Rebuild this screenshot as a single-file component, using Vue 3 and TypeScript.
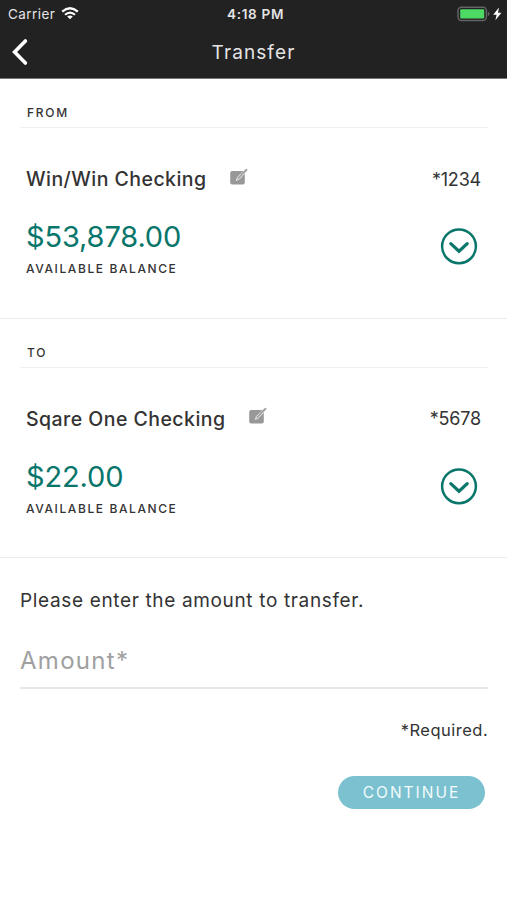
<script setup lang="ts">
interface Account {
  id: string
  label: string
  name: string
  mask: string
  balance: string
}

const accounts: Account[] = [
  { id: 'from', label: 'FROM', name: 'Win/Win Checking', mask: '*1234', balance: '$53,878.00' },
  { id: 'to', label: 'TO', name: 'Sqare One Checking', mask: '*5678', balance: '$22.00' },
]
</script>

<template>
  <main class="screen">
    <header class="top">
      <div class="status">
        <div class="carrier">
          <span class="carrier-name">Carrier</span>
          <svg class="wifi" viewBox="0 0 18 13" width="18" height="13">
            <path d="M1.2 4.6 Q9 -2.2 16.8 4.6" fill="none" stroke="#fff" stroke-width="2.3" />
            <path d="M4 7.8 Q9 3.4 14 7.8" fill="none" stroke="#fff" stroke-width="2.1" />
            <path d="M9 12.3 L6.2 9.6 Q9 7.6 11.8 9.6 Z" fill="#fff" />
          </svg>
        </div>
        <span class="time">4:18 PM</span>
        <div class="power">
          <svg viewBox="0 0 46 16" width="46" height="16">
            <rect x="1" y="1.2" width="28.4" height="13.2" rx="3.4" fill="none" stroke="#606462" stroke-width="1.5" />
            <rect x="3.2" y="3.2" width="24" height="9.2" rx="1.2" fill="#4cd964" />
            <path d="M30.8 5.4 Q32.6 6.2 32.6 7.8 Q32.6 9.4 30.8 10.2 Z" fill="#606462" />
            <path d="M42 1.6 L36.2 8.8 H39.6 L38.4 14.2 L44.4 6.8 H41 Z" fill="#fff" />
          </svg>
        </div>
      </div>
      <div class="nav">
        <button class="back" aria-label="Back">
          <svg viewBox="0 0 16 28" width="16" height="28">
            <path d="M13.4 3 L2.6 14 L13.4 25" fill="none" stroke="#fff" stroke-width="3.6" stroke-linecap="round" stroke-linejoin="miter" />
          </svg>
        </button>
        <h1 class="title">Transfer</h1>
      </div>
    </header>

    <section v-for="a in accounts" :key="a.id" class="account" :class="a.id">
      <h2 class="label">{{ a.label }}</h2>
      <div class="row">
        <span class="name">{{ a.name }}</span>
        <svg class="edit" viewBox="0 0 20 18" width="20" height="18">
          <rect x="1.2" y="3" width="14.6" height="13.4" rx="2" fill="#989898" />
          <path d="M7.4 12.4 L8.4 9.4 L16.6 1.2 L18.2 2.6 L10.2 11.2 Z" fill="#a2a2a2" stroke="#f2f2f2" stroke-width="0.9" stroke-linejoin="round" />
          <path d="M12.5 6.7 L17.6 1.7" stroke="#a2a2a2" stroke-width="1.7" stroke-linecap="round" />
        </svg>
        <span class="mask">{{ a.mask }}</span>
      </div>
      <div class="details">
        <div>
          <div class="balance">{{ a.balance }}</div>
          <div class="caption">AVAILABLE BALANCE</div>
        </div>
        <button class="expand" aria-label="Choose account">
          <svg viewBox="0 0 38 38" width="38" height="38">
            <circle cx="19" cy="19.3" r="16.9" fill="none" stroke="#08766a" stroke-width="2.5" />
            <path d="M10.8 16.6 L19 24.2 L27.2 16.6" fill="none" stroke="#08766a" stroke-width="3.2" stroke-linecap="round" stroke-linejoin="miter" />
          </svg>
        </button>
      </div>
    </section>

    <section class="form">
      <p class="prompt">Please enter the amount to transfer.</p>
      <div class="field"><span class="placeholder">Amount*</span></div>
      <p class="required">*Required.</p>
      <button class="continue"><span>CONTINUE</span></button>
    </section>
  </main>
</template>

<style>
body {
  background: #fff;
}
</style>

<style scoped>
.screen {
  height: 900px;
  overflow: hidden;
  background: #fff;
  color: #333;
  font-family: Inter, "Liberation Sans", sans-serif;
}
button {
  margin: 0;
  padding: 0;
  border: 0;
  background: none;
  font: inherit;
}
svg {
  display: block;
}
.top {
  height: 79px;
  box-sizing: border-box;
  background: #222;
  border-bottom: 1px solid #777;
  color: #e4e4e4;
}
.status {
  display: grid;
  grid-template-columns: 1fr auto 1fr;
  align-items: center;
  height: 27px;
  padding: 0 4px 0 8px;
}
.carrier {
  display: flex;
  align-items: center;
  gap: 6px;
}
.carrier-name {
  font-size: 13.5px;
  letter-spacing: 0.45px;
}
.time {
  font-size: 13.5px;
  font-weight: 600;
  letter-spacing: 0.7px;
}
.power {
  display: flex;
  justify-content: flex-end;
}
.nav {
  display: grid;
  grid-template-columns: 40px 1fr 40px;
  align-items: center;
  height: 50px;
}
.back {
  padding-left: 12px;
}
.title {
  margin: 2px 0 0;
  font-size: 19px;
  line-height: 24px;
  font-weight: 400;
  letter-spacing: 1.1px;
  text-align: center;
}
.account {
  height: 239.5px;
  box-sizing: border-box;
  padding: 0 19px 0 20px;
  border-bottom: 1.5px solid #ebebeb;
}
.label {
  height: 49px;
  box-sizing: border-box;
  margin: 0;
  padding: 26px 0 0 7px;
  border-bottom: 1px solid #f0f0f0;
  font-size: 12px;
  line-height: 16px;
  font-weight: 500;
  letter-spacing: 1.7px;
}
.row {
  display: flex;
  align-items: center;
  height: 28px;
  margin-top: 37px;
  padding: 0 7px 0 6px;
}
.name {
  font-size: 19.5px;
  font-weight: 500;
  letter-spacing: 0.46px;
}
.edit {
  margin: -5px 0 0 22.5px;
}
.mask {
  margin-left: auto;
  font-size: 18px;
  letter-spacing: -0.2px;
}
.details {
  display: flex;
  justify-content: space-between;
  margin-top: 26px;
  padding: 0 10px 0 6px;
}
.balance {
  color: #08766a;
  font-size: 29px;
  line-height: 35px;
  font-weight: 400;
  letter-spacing: -0.15px;
}
.caption {
  margin-top: 7px;
  font-size: 12px;
  line-height: 16px;
  font-weight: 500;
  letter-spacing: 1.6px;
}
.expand {
  height: 38px;
  margin-top: 8px;
}
.form {
  display: flex;
  flex-direction: column;
  padding: 30px 19px 0 20px;
}
.prompt {
  margin: 0;
  font-size: 19px;
  line-height: 26px;
  font-weight: 400;
  letter-spacing: 0.65px;
}
.field {
  height: 74px;
  box-sizing: border-box;
  margin-top: 1px;
  padding-top: 30px;
  border-bottom: 2px solid #e7e7e7;
}
.placeholder {
  display: block;
  color: #a0a0a0;
  font-size: 24px;
  line-height: 32px;
  font-weight: 400;
  letter-spacing: 1.3px;
}
.required {
  margin: 29px -0.2px 0 0;
  font-size: 16.5px;
  line-height: 24px;
  letter-spacing: 0.5px;
  text-align: right;
}
.continue {
  align-self: flex-end;
  width: 147px;
  height: 33px;
  margin: 34px 3px 0 0;
  border-radius: 17px;
  background: #7bc1cf;
  color: #f2fbfd;
  font-size: 15.5px;
  letter-spacing: 2px;
}
</style>
